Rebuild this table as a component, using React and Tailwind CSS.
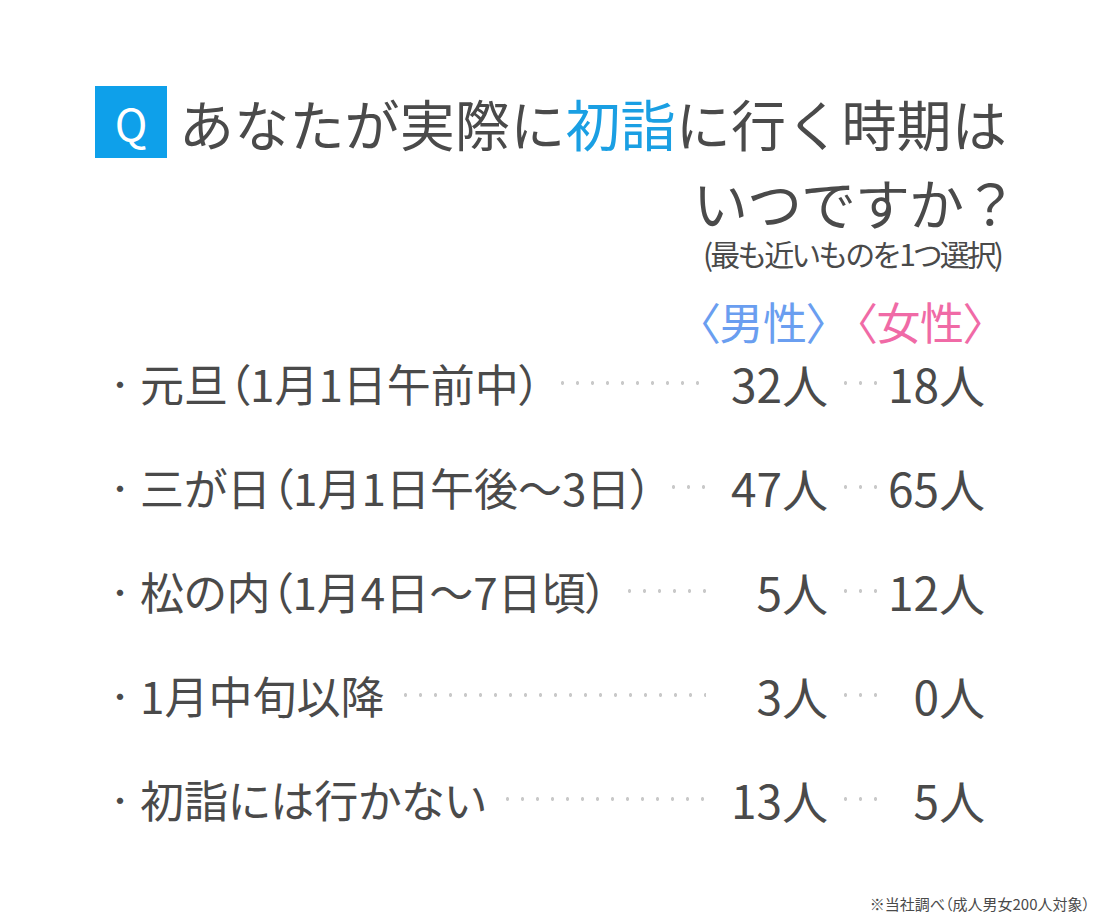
import React from "react";

const rows = [
  { label: "元旦（1月1日午前中）", male: "32人", female: "18人" },
  { label: "三が日（1月1日午後〜3日）", male: "47人", female: "65人" },
  { label: "松の内（1月4日〜7日頃）", male: "5人", female: "12人" },
  { label: "1月中旬以降", male: "3人", female: "0人" },
  { label: "初詣には行かない", male: "13人", female: "5人" },
];

function Leader({ className = "" }) {
  return (
    <div
      className={
        "h-[6px] bg-[radial-gradient(circle,#c9c9c9_1.6px,transparent_2px)] bg-[length:15px_6px] bg-repeat-x " +
        className
      }
    />
  );
}

export default function App() {
  return (
    <div
      className="relative w-[1100px] h-[922px] bg-white text-[#4a4a4a] overflow-hidden"
      style={{ fontFamily: '"Noto Sans CJK JP", "Noto Sans", sans-serif' }}
    >
      <div className="ml-[95px] w-[922px] pt-[86px]">
        <div className="flex items-center gap-[12px]">
          <div className="w-[72px] h-[72px] bg-[#0ea0ea] flex items-center justify-center text-white text-[44px] leading-none font-normal">
            Q
          </div>
          <div className="text-[55px] leading-[72px] tracking-[0.2px] whitespace-nowrap">
            あなたが実際に<span className="text-[#1a9fe3]">初詣</span>に行く時期は
          </div>
        </div>
        <div className="text-right text-[55px] leading-[70px] mt-[8px] tracking-[-1px]">いつですか？</div>
        <div className="text-right text-[30px] leading-[34px] tracking-[-3px] pr-[16px]">
          (最も近いものを1つ選択)
        </div>
      </div>

      <div className="ml-[110px] w-[880px] mt-[26px] pr-[5px]">
        <div className="flex justify-end text-[44px] leading-[50px] whitespace-nowrap [font-feature-settings:'palt']">
          <div className="w-[160px] text-right text-[#6a9ef0] tracking-[-0.5px]">〈男性〉</div>
          <div className="w-[157px] text-right text-[#f06aa6] tracking-[-0.5px]">〈女性〉</div>
        </div>
        <div className="mt-[-15px]">
          {rows.map((r) => (
            <div key={r.label} className="flex items-center h-[104px] text-[44px] leading-none">
              <div className="-ml-[6px] w-[32px] text-center text-[30px]">・</div>
              <div className="whitespace-nowrap pl-[4px] [font-feature-settings:'palt']">{r.label}</div>
              <Leader className="flex-1 ml-[14px] min-w-[20px]" />
              <div className="w-[122px] text-right whitespace-nowrap text-[46px]">{r.male}</div>
              <Leader className="w-[45px] ml-[10px]" />
              <div className="w-[102px] text-right whitespace-nowrap text-[46px]">{r.female}</div>
            </div>
          ))}
        </div>
      </div>

      <div className="absolute right-[10px] bottom-[8px] text-[15px] leading-[20px] [font-feature-settings:'palt']">
        ※当社調べ（成人男女200人対象）
      </div>
    </div>
  );
}
